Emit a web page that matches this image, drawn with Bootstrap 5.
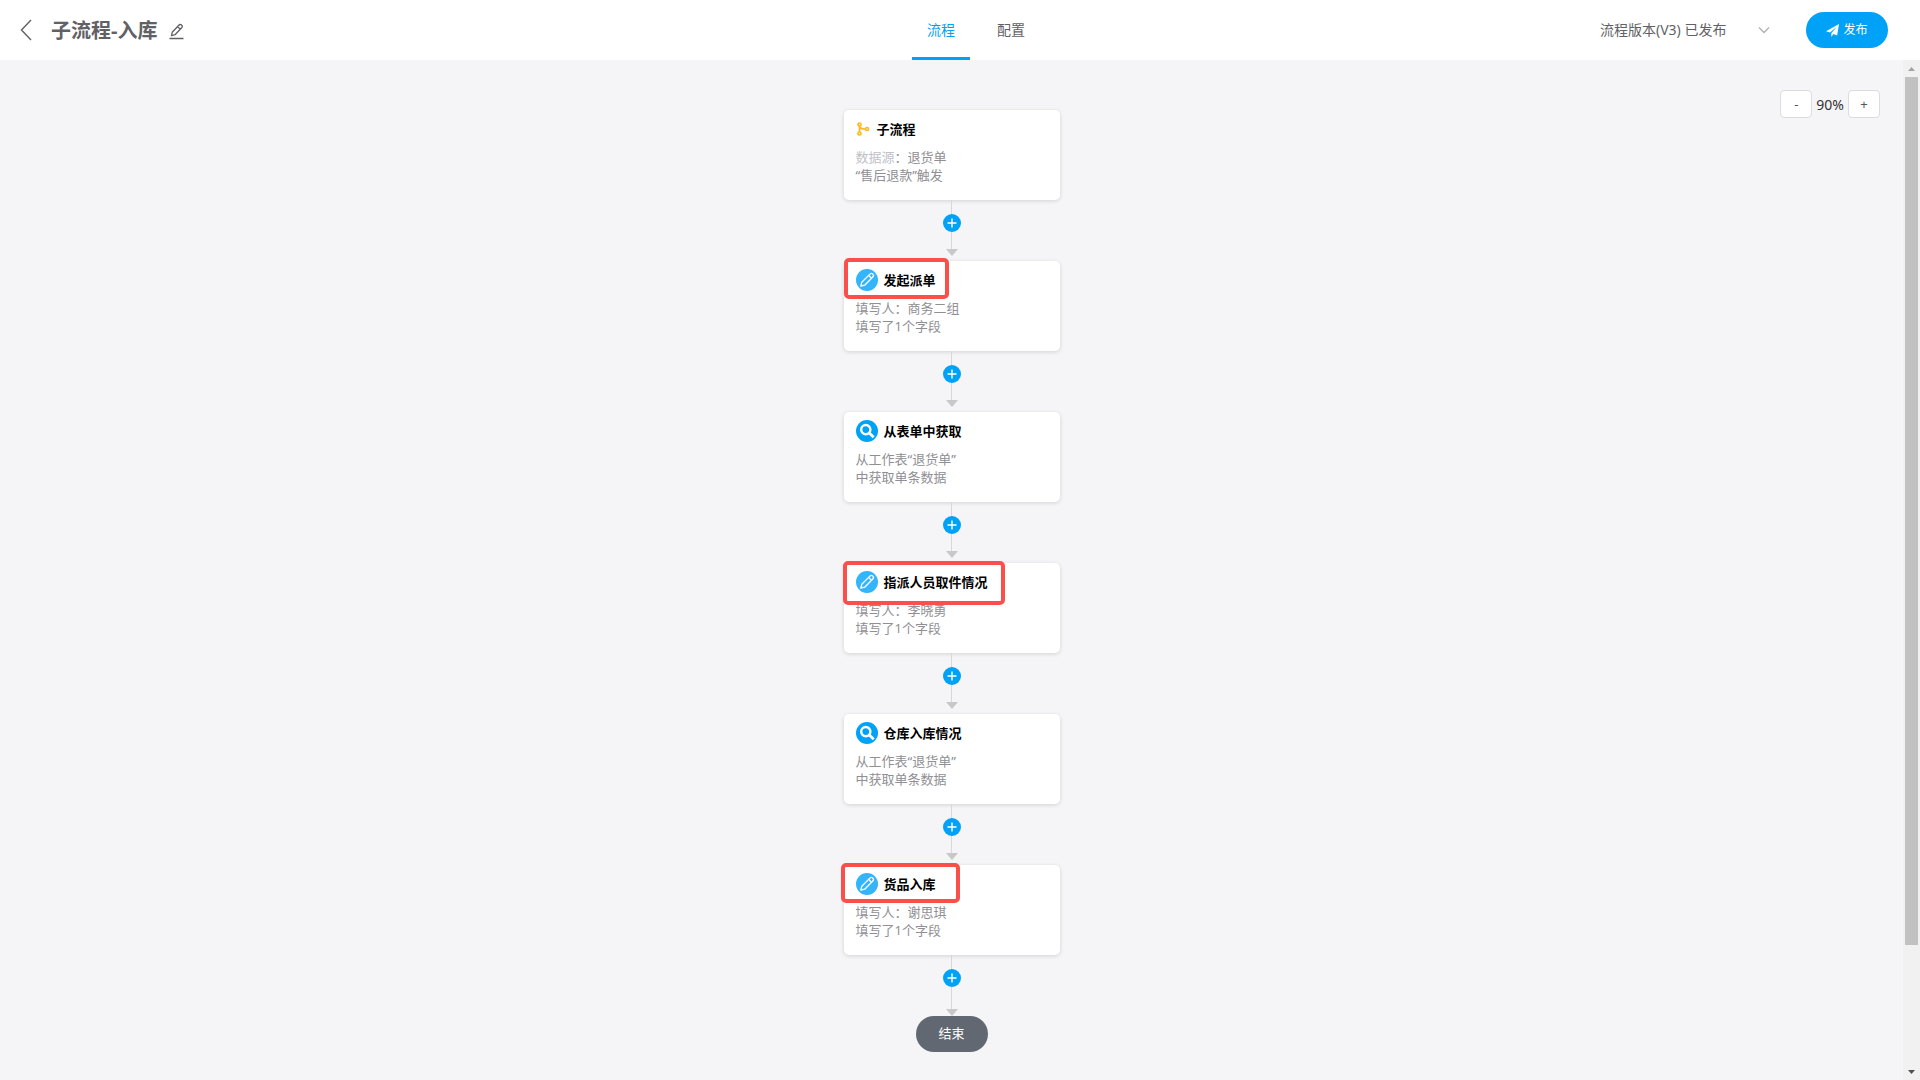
<!DOCTYPE html>
<html lang="zh-CN">
<head>
<meta charset="utf-8">
<meta name="viewport" content="width=device-width, initial-scale=1">
<title>子流程-入库</title>
<link href="https://cdn.jsdelivr.net/npm/bootstrap@5.3.0/dist/css/bootstrap.min.css" rel="stylesheet">
<style>
:root { --flow-blue: #00a2f8; --flow-line: #d8d8d8; --flow-arrow: #c8c8c8; }
body { font-family: "Noto Sans", "Noto Sans CJK SC", sans-serif; font-size: 14px; color: #333; background: #f5f5f8; }
svg { display: block; flex: none; }
.topbar { height: 60px; background: #fff; color: #616165; }
.topbar h1 { padding-top: 2px; font-size: 20px; line-height: 28px; font-weight: 700; }
.icon-btn { color: #616165; background: none; border: 0; padding: 0; }
.back-btn { margin-right: 19px; }
.edit-btn { margin-left: 10px; padding-top: 2px; }
.tabs { gap: 12px; margin-left: 48px; }
.tabs .nav-link { width: 58px; height: 60px; padding: 0; line-height: 60px; text-align: center; color: #616165; border-bottom: 3px solid transparent; border-radius: 0; }
.tabs .nav-link.active { color: var(--flow-blue); border-color: var(--flow-blue); }
.topbar-actions { gap: 36px; padding-right: 32px; }
.version-select { width: 170px; padding: 0 20px 0 0; font-size: 14px; line-height: 24px; color: #616165; border: 0; border-radius: 0; background-color: transparent; background-position: right center; background-size: 12px 12px;
  background-image: url("data:image/svg+xml,%3Csvg xmlns='http://www.w3.org/2000/svg' viewBox='0 0 12 12'%3E%3Cpath d='M1 3.5l5 5 5-5' fill='none' stroke='%23b0b0b4' stroke-width='1.3'/%3E%3C/svg%3E"); }
.publish-btn { width: 82px; height: 36px; padding: 0; font-size: 12px; color: #fff; background: var(--flow-blue); border: 0; }
.publish-btn:hover { color: #fff; background: #008fe0; }
.zoom-tools { position: absolute; top: 30px; right: 23px; gap: 4px; font-size: 14px; }
.zoom-tools .btn { width: 32px; height: 28px; padding: 0; font-size: 13px; line-height: 24px; color: #555; background: #fff; border: 1px solid #dcdce4; border-radius: 4px; }
.flow { padding: 50px 0 27px; }
.flow-card { position: relative; width: 216px; height: 90px; padding: 8px 12px; background: #fff; border-radius: 5px; box-shadow: 0 1px 4px rgba(0,0,0,.14); font-size: 13px; line-height: 18px; color: #8f8f94; }
.flow-card h2 { height: 22px; margin: 0 0 8px; gap: 6px; font-size: 13px; line-height: 22px; font-weight: 700; color: #000; }
.flow-card p { margin: 0; }
.src-label { color: #bfc1c9; }
.connector { position: relative; height: 61px; width: 18px; }
.connector .stem { width: 1px; height: 49px; background: var(--flow-line); }
.connector .head { border: 6px solid transparent; border-top: 7px solid var(--flow-arrow); border-bottom: 0; }
.connector.last .stem { height: 54px; }
.add-btn { position: absolute; top: 14px; left: 0; width: 18px; height: 18px; padding: 0; border: 0; background: none; }
.end-node { width: 72px; height: 36px; font-size: 13px; color: #fff; background: #626871; }
.mark-box { position: absolute; border: 4px solid #fa4f4a; border-radius: 5px; }
.mark-a { left: 0; top: -3px; width: 105px; height: 41px; }
.mark-b { left: -1px; top: -2px; width: 162px; height: 44px; }
.mark-c { left: -3px; top: -2px; width: 119px; height: 40px; }
.scroll-rail { width: 17px; background: #f1f1f1; }
.scroll-rail .cap { height: 17px; }
.scroll-rail .thumb { width: 13px; height: 88%; background: #c1c1c1; }
</style>
</head>
<body>
<svg width="0" height="0" class="position-absolute" aria-hidden="true">
  <symbol id="i-pen" viewBox="0 0 22 22"><circle cx="11" cy="11" r="11" fill="#33b4fb"/><g fill="none" stroke="#fff" stroke-width="1.3" stroke-linejoin="round"><path d="M4.800 17.200l1-4 8.100-8.100a2 2 0 0 1 2.900 2.900l-8.100 8.200z"/><path d="M12.600 6.400l2.900 2.900"/></g></symbol>
  <symbol id="i-find" viewBox="0 0 22 22"><circle cx="11" cy="11" r="11" fill="#00a2f8"/><circle cx="9.800" cy="9.600" r="4.600" fill="none" stroke="#fff" stroke-width="2.400"/><path d="M13.200 13l4.500 4.300" stroke="#fff" stroke-width="2.800"/></symbol>
  <symbol id="i-plus" viewBox="0 0 18 18"><circle cx="9" cy="9" r="9" fill="#00a2f8"/><path d="M9 4.500v9M4.500 9h9" stroke="#fff" stroke-width="1.400"/></symbol>
</svg>
<div class="d-flex flex-column min-vh-100">
  <header class="topbar d-flex align-items-center">
    <div class="col d-flex align-items-center ps-3">
      <button class="icon-btn back-btn ms-1" aria-label="返回"><svg width="12" height="22" viewBox="0 0 12 22" fill="none" stroke="currentColor" stroke-width="1.400"><path d="M11 1L1.500 11 11 21"/></svg></button>
      <h1 class="mb-0">子流程-入库</h1>
      <button class="icon-btn edit-btn" aria-label="编辑名称"><svg width="18" height="18" viewBox="0 0 18 18" fill="none" stroke="currentColor" stroke-width="1.300" stroke-linejoin="round"><path d="M2.500 16.500h14M4.500 13.600l.7-3.300 6.600-7.100a1.900 1.900 0 0 1 2.900 2.600L8 12.700zM10.500 4.600l2.800 2.600"/></svg></button>
    </div>
    <nav class="nav tabs">
      <a class="nav-link active" href="#" aria-current="page">流程</a>
      <a class="nav-link" href="#">配置</a>
    </nav>
    <div class="col topbar-actions d-flex align-items-center justify-content-end">
      <select class="form-select version-select" aria-label="流程版本"><option>流程版本(V3) 已发布</option></select>
      <button class="btn publish-btn rounded-pill d-flex align-items-center justify-content-center gap-1"><svg width="13" height="13" viewBox="0 0 12 12" fill="#fff"><path d="M12 0L10.300 10.600 6.800 9.200 4.900 11.900V8.500L10 2.600 3.700 7.900 0 6.600z"/></svg>发布</button>
    </div>
  </header>
  <div class="d-flex flex-grow-1">
    <main class="position-relative flex-grow-1">
      <div class="zoom-tools d-flex align-items-center">
        <button class="btn" aria-label="缩小">-</button><span>90%</span><button class="btn" aria-label="放大">+</button>
      </div>
      <div class="flow d-flex flex-column align-items-center">
        <section class="flow-card">
          <h2 class="d-flex align-items-center"><svg width="15" height="14" viewBox="0 0 15 14" fill="none" stroke="#ffb81d" stroke-width="1.700"><circle cx="3.500" cy="2.500" r="1.500"/><circle cx="3.500" cy="11.500" r="1.500"/><circle cx="11" cy="7" r="1.500"/><path d="M3.500 4v6M3.500 4.500c.4 2 2 2.500 6 2.500"/></svg>子流程</h2>
          <p><span class="src-label">数据源</span>：退货单</p><p>“售后退款”触发</p>
        </section>
        <div class="connector d-flex flex-column align-items-center"><i class="stem"></i><i class="head"></i><button class="add-btn" aria-label="添加节点"><svg width="18" height="18"><use href="#i-plus"/></svg></button></div>
        <section class="flow-card">
          <h2 class="d-flex align-items-center"><svg width="22" height="22"><use href="#i-pen"/></svg>发起派单</h2>
          <p>填写人：商务二组</p><p>填写了1个字段</p><div class="mark-box mark-a"></div>
        </section>
        <div class="connector d-flex flex-column align-items-center"><i class="stem"></i><i class="head"></i><button class="add-btn" aria-label="添加节点"><svg width="18" height="18"><use href="#i-plus"/></svg></button></div>
        <section class="flow-card">
          <h2 class="d-flex align-items-center"><svg width="22" height="22"><use href="#i-find"/></svg>从表单中获取</h2>
          <p>从工作表“退货单”</p><p>中获取单条数据</p>
        </section>
        <div class="connector d-flex flex-column align-items-center"><i class="stem"></i><i class="head"></i><button class="add-btn" aria-label="添加节点"><svg width="18" height="18"><use href="#i-plus"/></svg></button></div>
        <section class="flow-card">
          <h2 class="d-flex align-items-center"><svg width="22" height="22"><use href="#i-pen"/></svg>指派人员取件情况</h2>
          <p>填写人：李晓勇</p><p>填写了1个字段</p><div class="mark-box mark-b"></div>
        </section>
        <div class="connector d-flex flex-column align-items-center"><i class="stem"></i><i class="head"></i><button class="add-btn" aria-label="添加节点"><svg width="18" height="18"><use href="#i-plus"/></svg></button></div>
        <section class="flow-card">
          <h2 class="d-flex align-items-center"><svg width="22" height="22"><use href="#i-find"/></svg>仓库入库情况</h2>
          <p>从工作表“退货单”</p><p>中获取单条数据</p>
        </section>
        <div class="connector d-flex flex-column align-items-center"><i class="stem"></i><i class="head"></i><button class="add-btn" aria-label="添加节点"><svg width="18" height="18"><use href="#i-plus"/></svg></button></div>
        <section class="flow-card">
          <h2 class="d-flex align-items-center"><svg width="22" height="22"><use href="#i-pen"/></svg>货品入库</h2>
          <p>填写人：谢思琪</p><p>填写了1个字段</p><div class="mark-box mark-c"></div>
        </section>
        <div class="connector last d-flex flex-column align-items-center"><i class="stem"></i><i class="head"></i><button class="add-btn" aria-label="添加节点"><svg width="18" height="18"><use href="#i-plus"/></svg></button></div>
        <div class="end-node rounded-pill d-flex align-items-center justify-content-center">结束</div>
      </div>
    </main>
    <div class="scroll-rail d-flex flex-column" aria-hidden="true">
      <div class="cap d-flex align-items-center justify-content-center"><svg width="7" height="4" viewBox="0 0 7 4" fill="#a3a3a3"><path d="M0 4L3.500 0 7 4z"/></svg></div>
      <div class="flex-grow-1 d-flex justify-content-center"><div class="thumb"></div></div>
      <div class="cap d-flex align-items-center justify-content-center"><svg width="7" height="4" viewBox="0 0 7 4" fill="#505050"><path d="M0 0L3.500 4 7 0z"/></svg></div>
    </div>
  </div>
</div>
<script src="https://cdn.jsdelivr.net/npm/bootstrap@5.3.0/dist/js/bootstrap.bundle.min.js"></script>
</body>
</html>
